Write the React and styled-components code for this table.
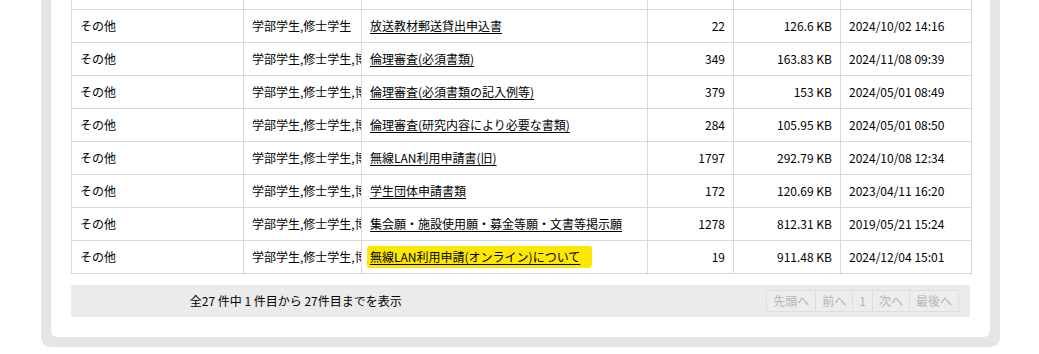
import React from "react";
import styled, { createGlobalStyle } from "styled-components";

const Global = createGlobalStyle`
  html, body { margin: 0; padding: 0; background: #fff; }
  body {
    font-family: "Noto Sans CJK JP", "Noto Sans", sans-serif;
    font-size: 12px;
    color: #000;
    overflow: hidden;
  }
`;

const Frame = styled.div`
  width: 959px;
  margin: 0 0 0 41px;
  background: #e5e5e5;
  padding: 0 10px 10px;
  box-sizing: border-box;
  border-radius: 0 0 9px 9px;
`;

const Panel = styled.div`
  background: #fff;
  padding: 0 20px 20px;
  border-radius: 0 0 6px 6px;
`;

const Table = styled.table`
  width: 900px;
  table-layout: fixed;
  border-collapse: collapse;
`;

const Cell = styled.td`
  border: 1px solid #d9d9d9;
  border-top: ${(p) => (p.$stub ? "none" : "1px solid #d9d9d9")};
  height: ${(p) => (p.$stub ? "9px" : "32px")};
  padding: 0 8px;
  text-align: ${(p) => (p.$right ? "right" : "left")};
  line-height: 16px;
  white-space: nowrap;
  overflow: hidden;
  vertical-align: middle;
`;

const FileLink = styled.a`
  color: #000;
  text-decoration: underline;
  text-underline-offset: 2px;
`;

const Marker = styled.span`
  display: inline-block;
  background: #ffe800;
  margin-left: -3px;
  padding: 3px 12px 3px 3px;
  border-radius: 3px 2px 4px 2px;
  line-height: 16px;
`;

const Pager = styled.div`
  margin-top: 11px;
  height: 32px;
  background: #ebebeb;
  display: grid;
  grid-template-columns: 1fr 1fr;
  align-items: center;
`;

const Summary = styled.div`
  text-align: center;
  line-height: 16px;
`;

const Buttons = styled.div`
  display: flex;
  justify-content: flex-end;
  padding-right: 11px;
`;

const PageButton = styled.span`
  display: inline-flex;
  align-items: center;
  justify-content: center;
  height: 22px;
  box-sizing: border-box;
  padding: 0 6px;
  border: 1px solid #dedede;
  margin-left: -1px;
  background: #ededed;
  color: #b4b4b4;
  line-height: 16px;
`;

const rows = [
  ["その他", "学部学生,修士学生", "放送教材郵送貸出申込書", "22", "126.6 KB", "2024/10/02 14:16"],
  ["その他", "学部学生,修士学生,博士学生", "倫理審査(必須書類)", "349", "163.83 KB", "2024/11/08 09:39"],
  ["その他", "学部学生,修士学生,博士学生", "倫理審査(必須書類の記入例等)", "379", "153 KB", "2024/05/01 08:49"],
  ["その他", "学部学生,修士学生,博士学生", "倫理審査(研究内容により必要な書類)", "284", "105.95 KB", "2024/05/01 08:50"],
  ["その他", "学部学生,修士学生,博士学生", "無線LAN利用申請書(旧)", "1797", "292.79 KB", "2024/10/08 12:34"],
  ["その他", "学部学生,修士学生,博士学生", "学生団体申請書類", "172", "120.69 KB", "2023/04/11 16:20"],
  ["その他", "学部学生,修士学生,博士学生", "集会願・施設使用願・募金等願・文書等掲示願", "1278", "812.31 KB", "2019/05/21 15:24"],
  ["その他", "学部学生,修士学生,博士学生", "無線LAN利用申請(オンライン)について", "19", "911.48 KB", "2024/12/04 15:01", true],
];

export default function App() {
  return (
    <>
      <Global />
      <Frame>
        <Panel>
          <Table>
            <colgroup>
              <col style={{ width: 172 }} />
              <col style={{ width: 118 }} />
              <col style={{ width: 286 }} />
              <col style={{ width: 86 }} />
              <col style={{ width: 107 }} />
              <col style={{ width: 131 }} />
            </colgroup>
            <tbody>
              <tr>
                {[0, 1, 2, 3, 4, 5].map((k) => (
                  <Cell key={k} $stub />
                ))}
              </tr>
              {rows.map((r, i) => (
                <tr key={i}>
                  <Cell>{r[0]}</Cell>
                  <Cell>{r[1]}</Cell>
                  <Cell>
                    {r[6] ? (
                      <Marker>
                        <FileLink href="#">{r[2]}</FileLink>
                      </Marker>
                    ) : (
                      <FileLink href="#">{r[2]}</FileLink>
                    )}
                  </Cell>
                  <Cell $right>{r[3]}</Cell>
                  <Cell $right>{r[4]}</Cell>
                  <Cell>{r[5]}</Cell>
                </tr>
              ))}
            </tbody>
          </Table>
          <Pager>
            <Summary>全27 件中 1 件目から 27件目までを表示</Summary>
            <Buttons>
              <PageButton>先頭へ</PageButton>
              <PageButton>前へ</PageButton>
              <PageButton>1</PageButton>
              <PageButton>次へ</PageButton>
              <PageButton>最後へ</PageButton>
            </Buttons>
          </Pager>
        </Panel>
      </Frame>
    </>
  );
}
